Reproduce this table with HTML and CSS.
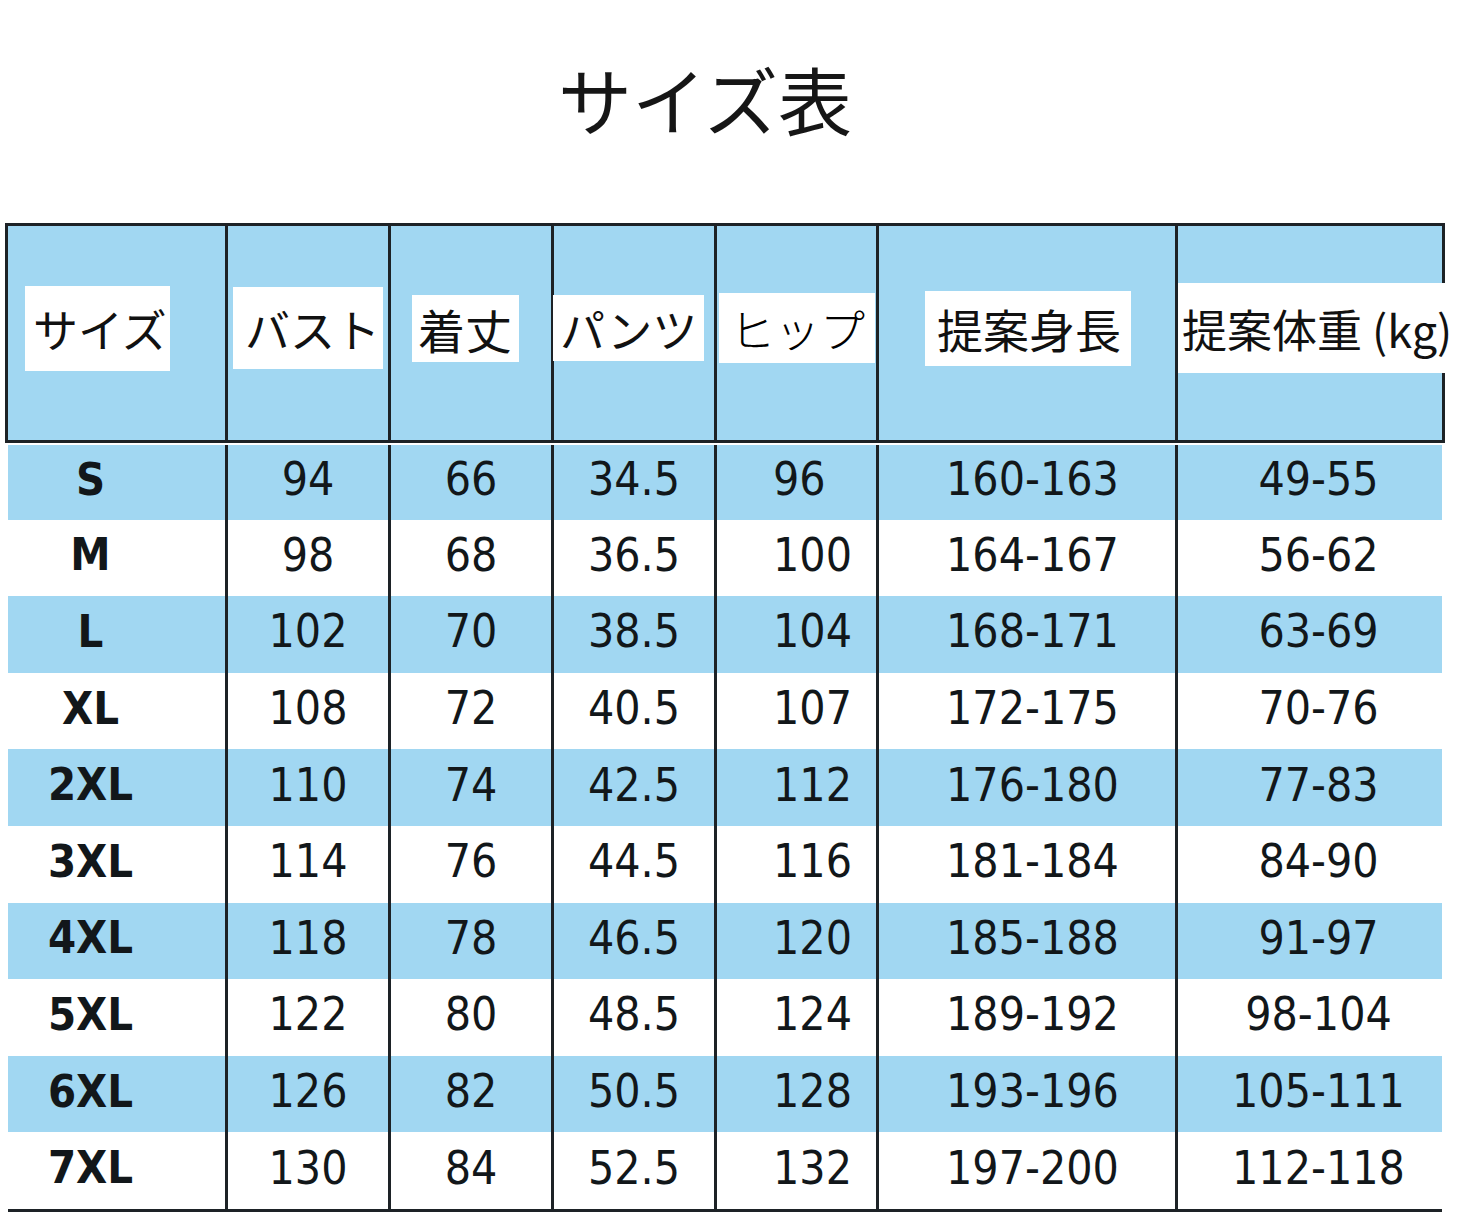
FILE: index.html
```html
<!DOCTYPE html>
<html lang="ja">
<head>
<meta charset="utf-8">
<title>サイズ表</title>
<link rel="stylesheet" href="styles.css">
</head>
<body>
<div class="sheet">
  <h1 class="title">サイズ表</h1>
  <div class="table">
    <div class="thead">
      <div class="th"><span class="lbl lbl-size">サイズ</span></div>
      <div class="th"><span class="lbl lbl-bust">バスト</span></div>
      <div class="th"><span class="lbl lbl-length">着丈</span></div>
      <div class="th"><span class="lbl lbl-pants">パンツ</span></div>
      <div class="th"><span class="lbl lbl-hip">ヒップ</span></div>
      <div class="th"><span class="lbl lbl-height">提案身長</span></div>
      <div class="th"><span class="lbl lbl-weight">提案体重 (kg)</span></div>
    </div>
    <div class="tbody">
      <div class="row"><div class="td c-size">S</div><div class="td">94</div><div class="td">66</div><div class="td">34.5</div><div class="td c-hip">96</div><div class="td c-height">160-163</div><div class="td c-weight">49-55</div></div>
      <div class="row"><div class="td c-size">M</div><div class="td">98</div><div class="td">68</div><div class="td">36.5</div><div class="td c-hip">100</div><div class="td c-height">164-167</div><div class="td c-weight">56-62</div></div>
      <div class="row"><div class="td c-size">L</div><div class="td">102</div><div class="td">70</div><div class="td">38.5</div><div class="td c-hip">104</div><div class="td c-height">168-171</div><div class="td c-weight">63-69</div></div>
      <div class="row"><div class="td c-size">XL</div><div class="td">108</div><div class="td">72</div><div class="td">40.5</div><div class="td c-hip">107</div><div class="td c-height">172-175</div><div class="td c-weight">70-76</div></div>
      <div class="row"><div class="td c-size">2XL</div><div class="td">110</div><div class="td">74</div><div class="td">42.5</div><div class="td c-hip">112</div><div class="td c-height">176-180</div><div class="td c-weight">77-83</div></div>
      <div class="row"><div class="td c-size">3XL</div><div class="td">114</div><div class="td">76</div><div class="td">44.5</div><div class="td c-hip">116</div><div class="td c-height">181-184</div><div class="td c-weight">84-90</div></div>
      <div class="row"><div class="td c-size">4XL</div><div class="td">118</div><div class="td">78</div><div class="td">46.5</div><div class="td c-hip">120</div><div class="td c-height">185-188</div><div class="td c-weight">91-97</div></div>
      <div class="row"><div class="td c-size">5XL</div><div class="td">122</div><div class="td">80</div><div class="td">48.5</div><div class="td c-hip">124</div><div class="td c-height">189-192</div><div class="td c-weight">98-104</div></div>
      <div class="row"><div class="td c-size">6XL</div><div class="td">126</div><div class="td">82</div><div class="td">50.5</div><div class="td c-hip">128</div><div class="td c-height">193-196</div><div class="td c-weight">105-111</div></div>
      <div class="row"><div class="td c-size">7XL</div><div class="td">130</div><div class="td">84</div><div class="td">52.5</div><div class="td c-hip">132</div><div class="td c-height">197-200</div><div class="td c-weight">112-118</div></div>
    </div>
  </div>
</div>
</body>
</html>
```
FILE: styles.css
```css
html, body {
  margin: 0;
  padding: 0;
  background: #ffffff;
}

.sheet {
  width: 1457px;
  height: 1222px;
  overflow: hidden;
  font-family: "Noto Sans CJK JP", "Noto Sans", sans-serif;
  color: #141414;
}

.title {
  margin: 0;
  padding: 60px 47px 0 0;
  height: 76px;
  font-size: 74px;
  line-height: 76px;
  font-weight: 400;
  text-align: center;
  color: #161616;
}

.table {
  margin: 87px 0 0 5px;
  width: 1440px;
}

.thead {
  display: grid;
  grid-template-columns: 217px 163px 163px 163px 162px 299px 267px;
  height: 220px;
  box-sizing: border-box;
  border: 3px solid #1d2226;
  background: #a1d7f2;
}

.th {
  display: flex;
  align-items: center;
  padding-bottom: 10px;
  box-sizing: border-box;
  border-left: 3px solid #1d2226;
  min-width: 0;
}

.th:first-child {
  border-left: none;
}

.lbl {
  display: flex;
  align-items: center;
  flex: none;
  box-sizing: border-box;
  background: #ffffff;
  font-size: 45px;
  line-height: 1;
  white-space: nowrap;
  color: #111;
}

.lbl-size   { margin-left: 17px; width: 145px; height: 85px; padding-left: 8px; }
.lbl-bust   { margin-left: 5px;  width: 150px; height: 82px; padding-left: 12px; }
.lbl-length { margin-left: 21px; width: 107px; height: 67px; padding-left: 6px; font-size: 47px; }
.lbl-pants  { margin-left: -1px; width: 151px; height: 66px; padding-left: 7px; }
.lbl-hip    { margin-left: 2px;  width: 156px; height: 70px; padding-left: 11px; font-weight: 300; color: #000; }
.lbl-height { margin-left: 46px; width: 206px; height: 75px; padding-left: 12px; font-size: 46px; }
.lbl-weight { margin-left: 0;    width: 280px; height: 90px; padding-left: 4px; font-size: 45px; }

.tbody {
  margin: 0 3px;
  border-bottom: 3px solid #1d2226;
}

.row {
  display: grid;
  grid-template-columns: 217px 163px 163px 163px 162px 299px 264px;
  height: 76.6px;
}

.row:nth-child(odd) {
  background: #a1d7f2;
}

.row:first-child {
  border-top: 2px solid #ffffff;
  height: 74.6px;
}

.td {
  display: flex;
  align-items: center;
  justify-content: center;
  box-sizing: border-box;
  padding-bottom: 6px;
  border-left: 3px solid #1d2226;
  font-family: "DejaVu Sans Condensed", "DejaVu Sans", sans-serif;
  font-stretch: condensed;
  font-size: 46px;
  color: #12171a;
  white-space: nowrap;
}

.td.c-size {
  border-left: none;
  padding-right: 52px;
  font-weight: bold;
  font-size: 45px;
}

.td.c-hip {
  justify-content: flex-start;
  padding-left: 56px;
}

.td.c-height {
  justify-content: flex-start;
  padding-left: 67px;
}

.td.c-weight {
  padding-left: 20px;
}
```
